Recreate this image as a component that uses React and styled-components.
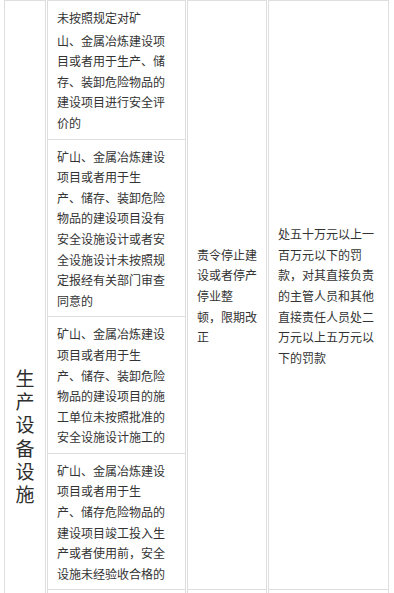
import React from "react";
import styled, { createGlobalStyle } from "styled-components";

const GlobalStyle = createGlobalStyle`
  html, body {
    margin: 0;
    padding: 0;
    background: #fff;
    overflow: hidden;
  }
  body {
    font-family: "Noto Sans CJK SC", "Noto Sans", sans-serif;
  }
`;

const Table = styled.table`
  border-collapse: separate;
  border-spacing: 1px 0;
  margin-left: 3px;
  table-layout: fixed;
  width: 387px;
`;

const Col = styled.col`
  width: ${(p) => p.$w}px;
`;

const Cell = styled.td`
  box-sizing: border-box;
  border: 1px solid #dedede;
  border-top: ${(p) => (p.$joined ? "none" : "1px solid #dedede")};
  padding: 7px 9px 5px;
  vertical-align: middle;
  font-size: 12px;
  line-height: 20.6px;
  color: #333;
  text-align: left;
`;

const CategoryCell = styled(Cell)`
  padding: 0;
`;

const VerticalLabel = styled.div`
  width: 1em;
  margin: 0 auto;
  font-size: 19px;
  line-height: 23.3px;
  color: #2e2e2e;
  word-break: break-all;
`;

const Line = styled.span`
  display: block;
  white-space: nowrap;
  margin-bottom: ${(p) => (p.$gap ? "2px" : "0")};
`;

const Lines = ({ lines, gapFirst }) =>
  lines.map((l, i) => (
    <Line key={i} $gap={gapFirst && i === 0}>
      {l}
    </Line>
  ));

const items = [
  {
    gapFirst: true,
    lines: [
      "未按照规定对矿",
      "山、金属冶炼建设项",
      "目或者用于生产、储",
      "存、装卸危险物品的",
      "建设项目进行安全评",
      "价的",
    ],
  },
  {
    lines: [
      "矿山、金属冶炼建设",
      "项目或者用于生",
      "产、储存、装卸危险",
      "物品的建设项目没有",
      "安全设施设计或者安",
      "全设施设计未按照规",
      "定报经有关部门审查",
      "同意的",
    ],
  },
  {
    lines: [
      "矿山、金属冶炼建设",
      "项目或者用于生",
      "产、储存、装卸危险",
      "物品的建设项目的施",
      "工单位未按照批准的",
      "安全设施设计施工的",
    ],
  },
  {
    lines: [
      "矿山、金属冶炼建设",
      "项目或者用于生",
      "产、储存危险物品的",
      "建设项目竣工投入生",
      "产或者使用前，安全",
      "设施未经验收合格的",
    ],
  },
];

const measure = ["责令停止建", "设或者停产", "停业整", "顿，限期改", "正"];
const penalty = [
  "处五十万元以上一",
  "百万元以下的罚",
  "款，对其直接负责",
  "的主管人员和其他",
  "直接责任人员处二",
  "万元以上五万元以",
  "下的罚款",
];

const laterItems = [
  [
    "未在有较大危险因素",
    "的生产经营场所和有",
    "关设施、设备上设置",
    "明显的安全警示标志",
    "的",
  ],
  [
    "安全设备的安装、使",
    "用、检测、改造和报",
    "废不符合国家标准或",
    "者行业标准的",
  ],
];

const laterMeasure = ["责令限期改", "正"];
const laterPenalty = [
  "可以处五万元以下",
  "的罚款；逾期未改",
  "正的，处五万元以",
  "上二十万元以下的",
  "罚款，对其直接负",
  "责的主管人员和其",
  "他直接责任人员处",
  "一万元以上二万元",
  "以下的罚款；情节",
  "严重的，责令停产",
  "停业整顿；构成犯",
  "罪的，依法追究刑",
  "事责任",
];

export default function App() {
  const total = items.length + laterItems.length;
  return (
    <>
      <GlobalStyle />
      <Table>
        <colgroup>
          <Col $w={42} />
          <Col $w={139} />
          <Col $w={80} />
          <Col $w={121} />
        </colgroup>
        <tbody>
          {items.map((it, i) => (
            <tr key={i}>
              {i === 0 && (
                <CategoryCell rowSpan={total}>
                  <VerticalLabel>生产设备设施</VerticalLabel>
                </CategoryCell>
              )}
              <Cell $joined={i > 0}>
                <Lines lines={it.lines} gapFirst={it.gapFirst} />
              </Cell>
              {i === 0 && (
                <>
                  <Cell rowSpan={items.length}>
                    <Lines lines={measure} />
                  </Cell>
                  <Cell rowSpan={items.length}>
                    <Lines lines={penalty} />
                  </Cell>
                </>
              )}
            </tr>
          ))}
          {laterItems.map((lines, i) => (
            <tr key={`l${i}`}>
              <Cell $joined>
                <Lines lines={lines} />
              </Cell>
              {i === 0 && (
                <>
                  <Cell $joined rowSpan={laterItems.length}>
                    <Lines lines={laterMeasure} />
                  </Cell>
                  <Cell $joined rowSpan={laterItems.length}>
                    <Lines lines={laterPenalty} />
                  </Cell>
                </>
              )}
            </tr>
          ))}
        </tbody>
      </Table>
    </>
  );
}
